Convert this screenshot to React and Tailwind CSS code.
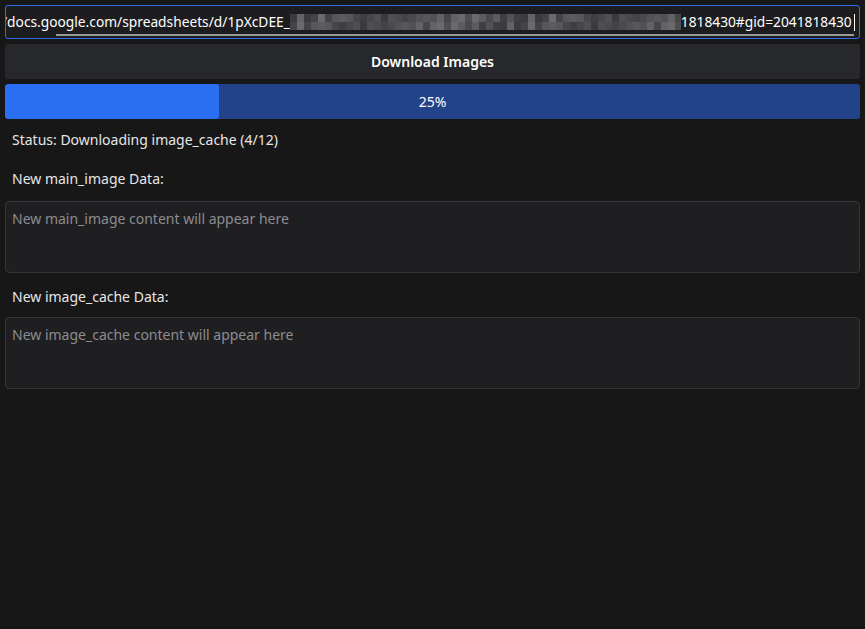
import { useState } from 'react';

const shades = ['#3b3b3e', '#474749', '#525254', '#5c5c5e', '#444447', '#4f4f51', '#636365', '#3f3f42', '#575759', '#4a4a4d', '#6a6a6c'];

function Mosaic() {
  const cols = 56;
  return (
    <span className="inline-flex flex-col h-[16px] w-[391px] overflow-hidden align-middle">
      {[0, 1].map((r) => (
        <span key={r} className="flex h-[8px]">
          {Array.from({ length: cols }).map((_, i) => (
            <span
              key={i}
              className="h-[8px] w-[7px] shrink-0"
              style={{ background: shades[(i * 5 + r * 4 + ((i * i) % 3)) % shades.length] }}
            />
          ))}
        </span>
      ))}
    </span>
  );
}

function App() {
  const [progress] = useState(25);

  return (
    <div className="min-h-screen bg-[#171717] text-[#e6e6e6] p-[5px] flex flex-col gap-[5px] text-[14px] font-['Noto_Sans','Open_Sans',sans-serif]">
      <div className="relative h-[34px] rounded-[3px] border border-[#2f6fe6] bg-[#1d1d20] overflow-hidden">
        <div className="flex items-center h-full whitespace-nowrap text-[13.75px] text-white ml-[-4px]">
          <span>/docs.google.com/spreadsheets/d/1pXcDEE_</span>
          <Mosaic />
          <span>1818430#gid=2041818430</span>
          <span className="ml-[2px] w-px h-[17px] bg-white" />
        </div>
        <div className="absolute left-[50px] right-[5px] bottom-[2px] h-[2px] bg-[#9a9a9c]" />
      </div>

      <button className="h-[35px] rounded-[3px] bg-[#27282c] text-white font-semibold text-[14px]">
        Download Images
      </button>

      <div className="relative h-[35px] rounded-[3px] bg-[#22428a] overflow-hidden">
        <div className="h-full bg-[#2a6ff2] rounded-[3px]" style={{ width: `${progress}%` }} />
        <div className="absolute inset-0 flex items-center justify-center text-white text-[14px]">
          {progress}%
        </div>
      </div>

      <p className="mt-[6px] px-[7px] leading-[20px]">Status: Downloading image_cache (4/12)</p>

      <p className="mt-[14px] px-[7px] leading-[20px]">New main_image Data:</p>
      <textarea
        className="mt-[7px] h-[72px] rounded-[4px] border border-[#36363a] bg-[#1f1f22] px-[6px] py-[6px] text-[14px] text-white placeholder:text-[#8c8c8e] resize-none outline-none"
        placeholder="New main_image content will appear here"
      />

      <p className="mt-[9px] px-[7px] leading-[20px]">New image_cache Data:</p>
      <textarea
        className="mt-[5px] h-[72px] rounded-[4px] border border-[#36363a] bg-[#1f1f22] px-[6px] py-[6px] text-[14px] text-white placeholder:text-[#8c8c8e] resize-none outline-none"
        placeholder="New image_cache content will appear here"
      />
    </div>
  );
}

export default App;
